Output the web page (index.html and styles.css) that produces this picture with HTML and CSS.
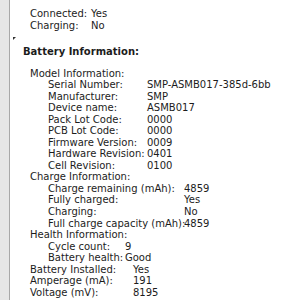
FILE: index.html
```html
<!DOCTYPE html>
<html>
<head>
    <title>Battery Information</title>
    <link rel="stylesheet" href="styles.css">
</head>
<body>
    <div id="page">
        <div id="strip"></div>
        <div id="info">
            <svg class="mark" width="4" height="4" viewBox="0 0 4 4"><path d="M0 0H3L0 3Z" fill="#333"/></svg>
            <div class="group top">
                <div class="row"><span class="label">Connected:</span><span>Yes</span></div>
                <div class="row"><span class="label">Charging:</span><span>No</span></div>
            </div>

            <h1>Battery Information:</h1>

            <div class="group">
                <div class="row">Model Information:</div>
                <div class="sub model">
                    <div class="row"><span class="label">Serial Number:</span><span>SMP-ASMB017-385d-6bb</span></div>
                    <div class="row"><span class="label">Manufacturer:</span><span>SMP</span></div>
                    <div class="row"><span class="label">Device name:</span><span>ASMB017</span></div>
                    <div class="row"><span class="label">Pack Lot Code:</span><span>0000</span></div>
                    <div class="row"><span class="label">PCB Lot Code:</span><span>0000</span></div>
                    <div class="row"><span class="label">Firmware Version:</span><span>0009</span></div>
                    <div class="row"><span class="label">Hardware Revision:</span><span>0401</span></div>
                    <div class="row"><span class="label">Cell Revision:</span><span>0100</span></div>
                </div>
                <div class="row">Charge Information:</div>
                <div class="sub charge">
                    <div class="row"><span class="label">Charge remaining (mAh):</span><span>4859</span></div>
                    <div class="row"><span class="label">Fully charged:</span><span>Yes</span></div>
                    <div class="row"><span class="label">Charging:</span><span>No</span></div>
                    <div class="row"><span class="label">Full charge capacity (mAh):</span><span>4859</span></div>
                </div>
                <div class="row">Health Information:</div>
                <div class="sub health">
                    <div class="row"><span class="label">Cycle count:</span><span>9</span></div>
                    <div class="row"><span class="label">Battery health:</span><span>Good</span></div>
                </div>
                <div class="bottom">
                    <div class="row"><span class="label">Battery Installed:</span><span>Yes</span></div>
                    <div class="row"><span class="label">Amperage (mA):</span><span>191</span></div>
                    <div class="row"><span class="label">Voltage (mV):</span><span>8195</span></div>
                </div>
            </div>
        </div>
    </div>
</body>
</html>
```

FILE: styles.css
```css
html, body {
    margin: 0;
    padding: 0;
    overflow: hidden;
    background-color: white;
}

#page {
    display: flex;
    height: 300px;
    font-family: "DejaVu Sans", sans-serif;
    font-size: 10px;
    line-height: 11.53px;
    color: #1c1c1c;
}

#strip {
    width: 9px;
    background-color: #e6e6e6;
    border-right: 1px solid #a8a8a8;
}

#info {
    position: relative;
    flex: 1;
    padding-top: 8px;
}

.mark {
    position: absolute;
    left: 3px;
    top: 37px;
}

.row {
    display: flex;
    white-space: nowrap;
}

.group {
    padding-left: 20px;
}

.top .label {
    width: 61px;
}

h1 {
    margin: 15px 0 10px 13px;
    font-size: 10px;
    line-height: 11.53px;
}

.sub {
    padding-left: 18px;
}

.model .label {
    width: 99px;
}

.charge .label {
    width: 136px;
}

.health .label {
    width: 77px;
}

.bottom .label {
    width: 103px;
}
```
